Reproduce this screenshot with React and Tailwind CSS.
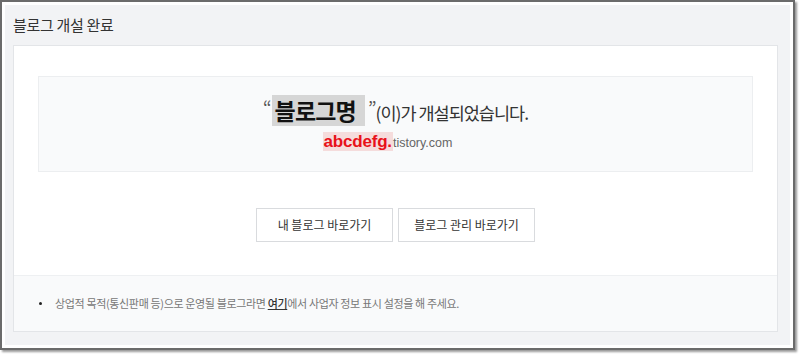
import React from 'react';

const ko = { fontFamily: '"Noto Sans CJK KR", "Noto Sans", sans-serif' };
const latin = { fontFamily: '"Liberation Sans", Arial, sans-serif' };

const BlogCreated = () => {
  return (
    <div className="w-[800px] h-[356px] bg-white" style={ko}>
      {/* window frame */}
      <div className="w-[795px] h-[350px] border-2 border-[#6b6b6b] bg-white p-[3px] shadow-[2px_2px_2px_rgba(0,0,0,0.4)]">
        <div className="h-full bg-[#f2f3f5] pl-2 pr-3 flex flex-col">
          {/* Header */}
          <div className="h-10 flex items-center">
            <h1 className="text-[15px] text-[#333] tracking-[-0.3px]">블로그 개설 완료</h1>
          </div>

          {/* Card */}
          <div className="h-[287px] bg-white border border-[#e3e5e8] flex flex-col">
            <div className="px-6 pt-[30px]">
              <div className="h-[96px] bg-[#f9fafb] border border-[#eceef0] flex flex-col items-center justify-center pb-[2px]">
                <p className="flex items-end text-[17.5px] text-[#333] tracking-[-1px] leading-none">
                  <span className="text-[#555] text-[18px] mr-[1px] mb-[10px]">“</span>
                  <span className="bg-[#d6d6d6] text-[23px] font-bold text-[#111] pl-[3px] pr-[9px] py-[4px] tracking-[-0.8px]">블로그명</span>
                  <span className="text-[#555] text-[18px] ml-[3px] mb-[10px]">”</span>
                  <span className="mb-[5px]">(이)가 개설되었습니다.</span>
                </p>
                <p className="mt-[6px] mr-[16px] flex items-end leading-none" style={latin}>
                  <span className="bg-[#f5dcdc] text-[#e8111a] text-[17px] font-bold px-[1px] py-[1px] tracking-[-0.2px]">abcdefg.</span>
                  <span className="text-[#666] text-[12.5px] mb-[2px]">tistory.com</span>
                </p>
              </div>
            </div>

            {/* Buttons */}
            <div className="mt-9 flex justify-center gap-[5px]">
              <button className="w-[137px] h-[34px] border border-[#d9dbde] bg-white text-[12px] text-[#333]">
                내 블로그 바로가기
              </button>
              <button className="w-[137px] h-[34px] border border-[#d9dbde] bg-white text-[12px] text-[#333]">
                블로그 관리 바로가기
              </button>
            </div>

            {/* Footer note */}
            <div className="mt-auto h-[56px] bg-[#f9fafb] border-t border-[#eef0f2] flex items-center pl-[25px]">
              <span className="w-[3px] h-[3px] rounded-full bg-[#222] mr-[13px]" />
              <p className="text-[11px] text-[#777] tracking-[-0.35px]">
                상업적 목적(통신판매 등)으로 운영될 블로그라면{' '}
                <a className="underline text-[#333] font-medium">여기</a>에서 사업자 정보 표시 설정을 해 주세요.
              </p>
            </div>
          </div>
        </div>
      </div>
    </div>
  );
};

export default BlogCreated;
